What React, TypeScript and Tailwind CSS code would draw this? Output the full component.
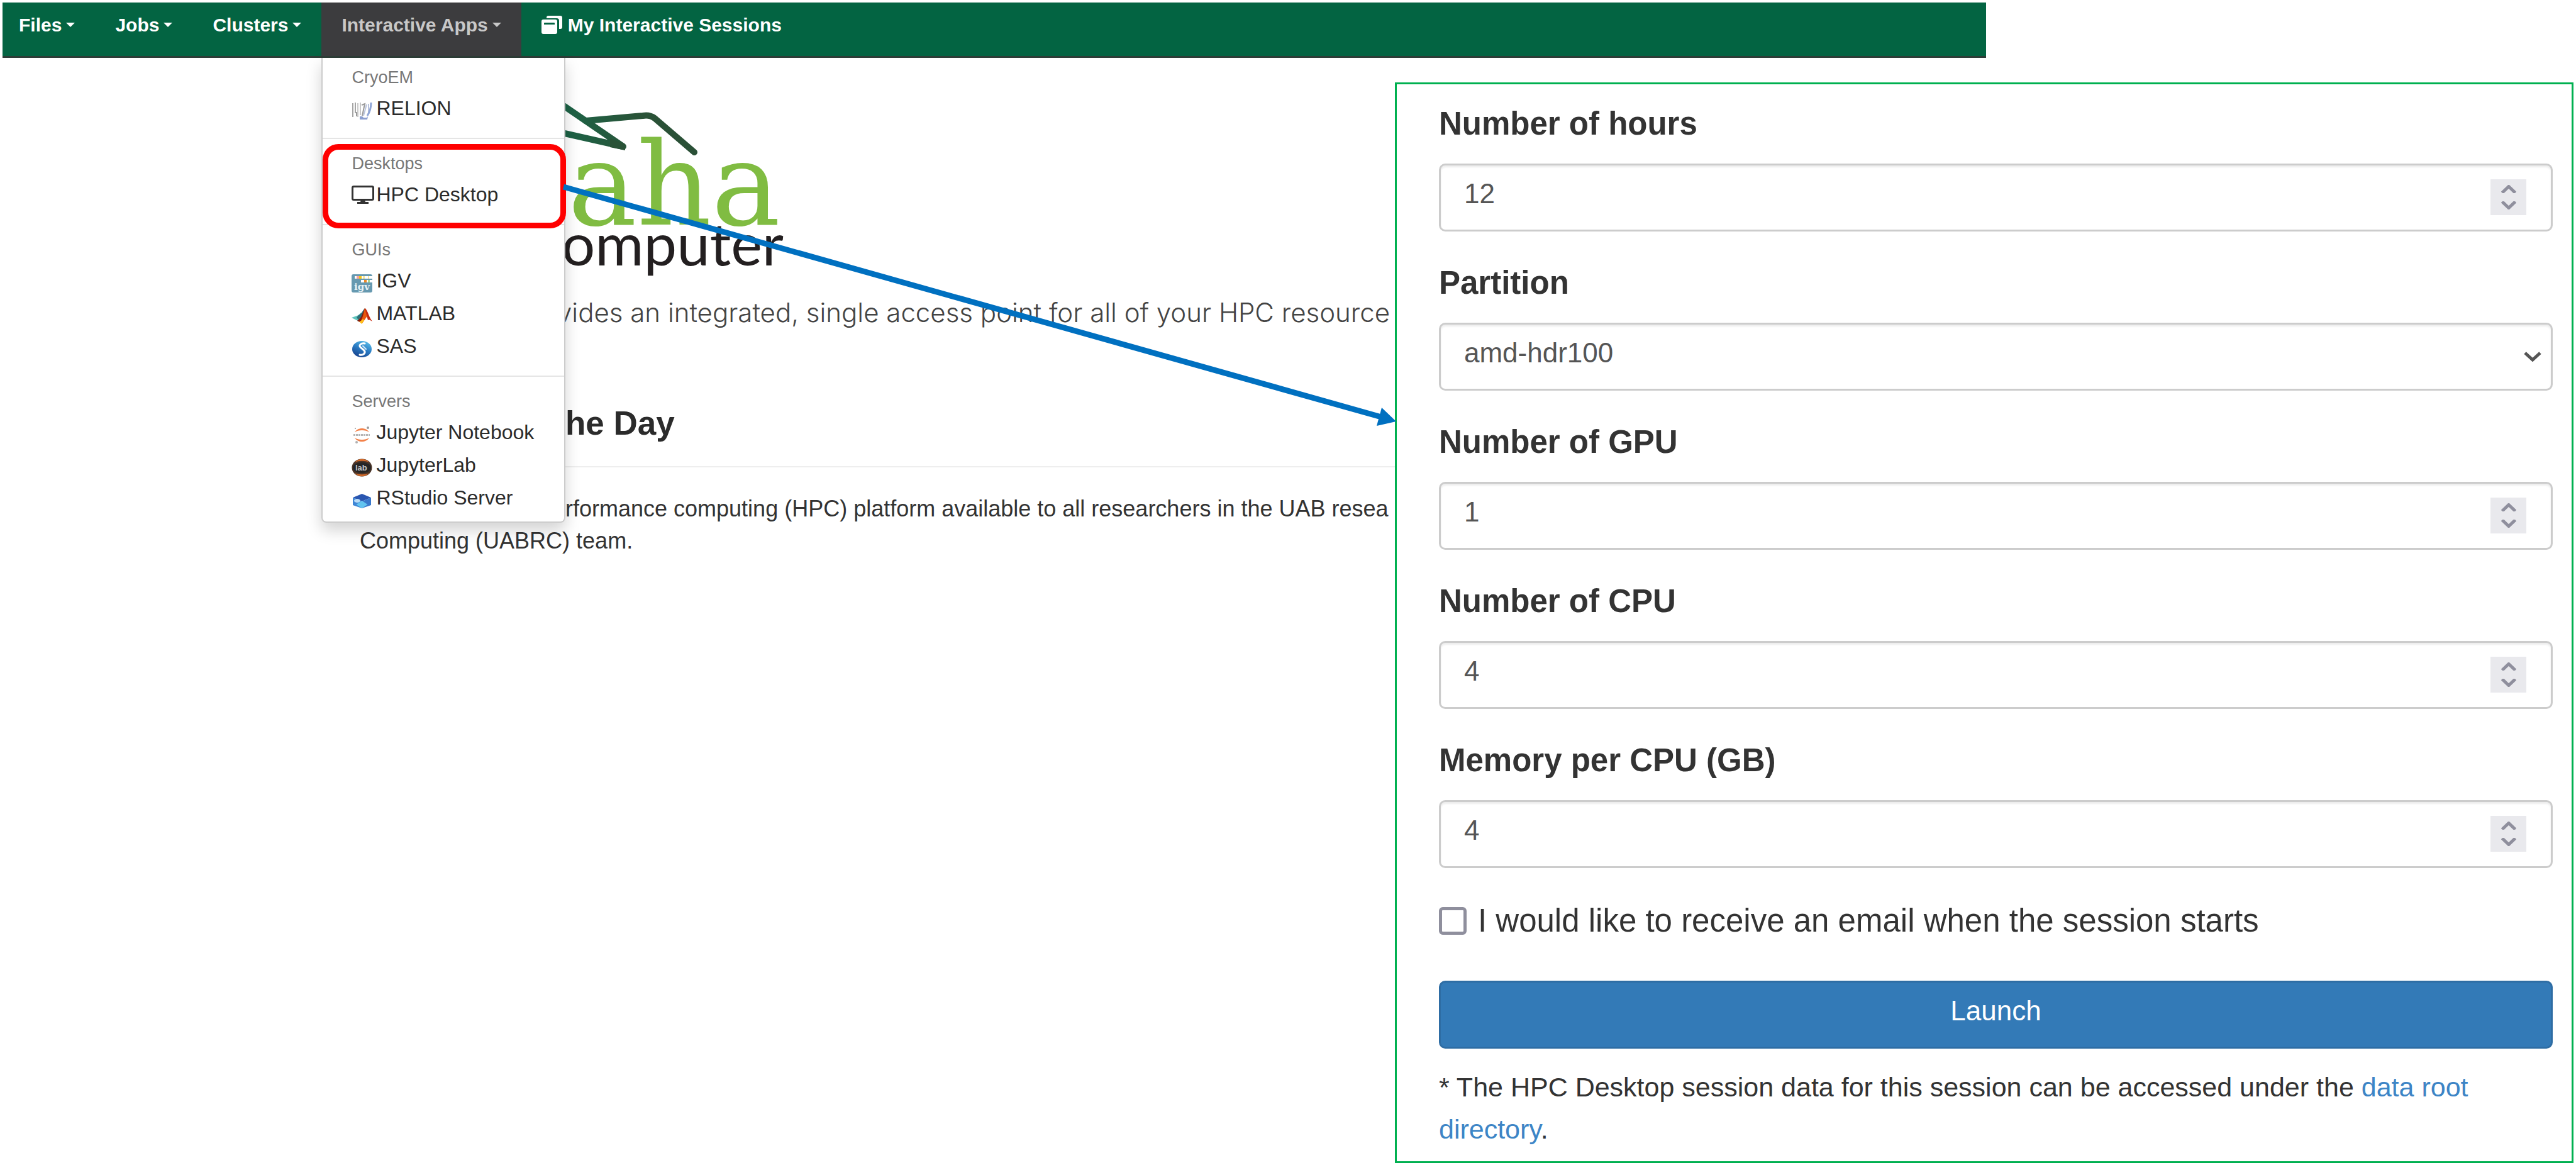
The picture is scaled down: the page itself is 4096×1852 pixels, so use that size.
import React from "react";

const SANS = "font-['Liberation_Sans',Arial,sans-serif]";

function Caret() {
  return (
    <svg className="h-[7px] w-[14px] fill-current" viewBox="0 0 14 7" aria-hidden="true">
      <path d="M0 0h14L7 7z" />
    </svg>
  );
}

function SessionsIcon() {
  return (
    <svg className="h-[29px] w-[33px]" viewBox="0 0 33 29" aria-hidden="true">
      <path fill="#fff" d="M11 0h19a3 3 0 0 1 3 3v15a3 3 0 0 1-3 3h-2V8a4 4 0 0 0-4-4H8V3a3 3 0 0 1 3-3z" />
      <path
        fill="#fff"
        fillRule="evenodd"
        d="M3 6h19a3 3 0 0 1 3 3v17a3 3 0 0 1-3 3H3a3 3 0 0 1-3-3V9a3 3 0 0 1 3-3zm2 5a1 1 0 0 0-1 1v2h17v-2a1 1 0 0 0-1-1z"
      />
    </svg>
  );
}

function RelionIcon() {
  return (
    <svg className="h-[29px] w-[33px]" viewBox="0 0 33 29" aria-hidden="true">
      <g fill="none" strokeWidth="2">
        <path stroke="#a5a5a5" d="M2 2v22M6 1v17" />
        <path stroke="#c9c9c9" d="M10 2v22M14 1v20" />
        <path stroke="#9a9a9a" d="M8 16v7M16 5l5-2-4 19" />
        <path stroke="#b9c3dc" d="M24 4l-5 18M27 3v14" />
        <path stroke="#8fa5d6" strokeWidth="3" d="M31 1c0 8-2 15-6 21" />
      </g>
      <path fill="#8c9fd0" d="M13 23h4l2 2h5l2-2-1 5H13z" />
    </svg>
  );
}

function DesktopIcon() {
  return (
    <svg className="h-[37px] w-[36px]" viewBox="0 0 36 37" aria-hidden="true">
      <rect x="1.500" y="1.500" width="33" height="21" rx="2" fill="none" stroke="#333" strokeWidth="3" />
      <path fill="#333" d="M15 23h6l1 3h5v3H9v-3h5z" />
    </svg>
  );
}

function IgvIcon() {
  return (
    <svg className="h-[29px] w-[33px]" viewBox="0 0 33 29" aria-hidden="true">
      <rect width="33" height="29" rx="3" fill="#6699b0" />
      <path fill="#fff" d="M5 3h28v4H5zM15 9h18v4H15z" />
      <path fill="#f4a3a0" d="M8 3h4v4H8z" />
      <path fill="#f5c518" d="M12 3h4v4h-4z" />
      <path fill="#f9e79f" d="M18 3h3v4h-3zM26 3h2v4h-2z" />
      <path fill="#f08a24" d="M20 9h4v4h-4z" />
      <path fill="#a9d18e" d="M26 9h3v4h-3z" />
      <text x="4" y="25" fontSize="15" fontWeight="700" fill="#e6f2f5" fontFamily="DejaVu Serif, serif">
        igv
      </text>
    </svg>
  );
}

function MatlabIcon() {
  return (
    <svg className="h-[29px] w-[33px]" viewBox="0 0 33 29" aria-hidden="true">
      <path fill="#5fc4bd" d="M0 17l11-4 4-4 3 2-8 11-4-2z" />
      <path fill="#2f6f78" d="M11 13c5-2 7-8 10-11l-4 13-6 5-3-3z" />
      <path fill="#8a1c0c" d="M21 2l-6 14-6 6 4 2 8-8z" />
      <path fill="#e8590c" d="M21 2c2 0 3 6 5 11l-9 13-4-2c5-5 6-14 8-22z" />
      <path fill="#ffc21a" d="M12 23c2 0 4-1 6-4l2 2-4 6z" />
      <path fill="#c62a10" d="M21 2c4 1 6 13 12 21-3-2-5-3-7-2z" />
    </svg>
  );
}

function SasIcon() {
  return (
    <svg className="h-[29px] w-[33px]" viewBox="0 0 33 29" aria-hidden="true">
      <defs>
        <linearGradient id="sas" x1="0.8" y1="0" x2="0.3" y2="1">
          <stop offset="0" stopColor="#5cc0ea" />
          <stop offset="0.5" stopColor="#2b7cc4" />
          <stop offset="1" stopColor="#16418c" />
        </linearGradient>
      </defs>
      <ellipse cx="16.500" cy="15" rx="15.500" ry="13" fill="url(#sas)" />
      <path
        fill="none"
        stroke="#fff"
        strokeWidth="3"
        strokeLinecap="round"
        d="M21 6c-6-1-10 3-7 6l6 5c3 4-1 8-7 7"
      />
      <path fill="none" stroke="#d7ecf8" strokeWidth="2" strokeLinecap="round" d="M18 10l5 5" />
    </svg>
  );
}

function JupyterIcon() {
  return (
    <svg className="h-[29px] w-[33px]" viewBox="0 0 33 29" aria-hidden="true">
      <path fill="#f3824a" d="M5 10c5-8 18-8 23 0-6-4-17-4-23 0zM5 19c5 8 18 8 23 0-6 4-17 4-23 0z" />
      <circle cx="26" cy="3" r="2" fill="#9a9a9a" />
      <circle cx="6" cy="4" r="1" fill="#9a9a9a" />
      <circle cx="8" cy="26" r="2" fill="#b0b0b0" />
      <path stroke="#b4b4b4" strokeWidth="3" strokeDasharray="3 1" d="M3 14.500h26" />
    </svg>
  );
}

function JupyterLabIcon() {
  return (
    <svg className="h-[29px] w-[33px]" viewBox="0 0 33 29" aria-hidden="true">
      <ellipse cx="16.500" cy="14.500" rx="16" ry="14" fill="#4a3428" />
      <path fill="#d0692a" d="M5 6c6-7 17-7 23 0-6-3-17-3-23 0zM5 23c6 7 17 7 23 0-6 3-17 3-23 0z" />
      <ellipse cx="16.500" cy="14.500" rx="14.500" ry="8.500" fill="#262626" />
      <text x="6" y="19" fontSize="13" fontWeight="700" fill="#c4c4c4" fontFamily="Liberation Sans, sans-serif">
        lab
      </text>
    </svg>
  );
}

function RStudioIcon() {
  return (
    <svg className="h-[29px] w-[33px]" viewBox="0 0 33 29" aria-hidden="true">
      <path fill="#2a56b0" d="M16.500 4L31 10 16.500 16 2 10z" />
      <path fill="#3f86d6" d="M2 10l14.500 6v11L2 22z" />
      <path fill="#3a78cc" d="M31 10l-14.500 6v11L31 22z" />
      <path fill="#62c4f0" d="M16.500 15l9 6-9 6-9-6z" />
      <ellipse cx="9" cy="15" rx="5" ry="3" fill="#b9dcf7" />
    </svg>
  );
}

function NavItem({ label }: { label: string }) {
  return (
    <a href="#" className="flex items-center gap-[7px] px-[32px] pb-[14px] text-white first:pl-[26px]">
      {label}
      <Caret />
    </a>
  );
}

function MenuHeader({ children }: { children: React.ReactNode }) {
  return <h6 className="text-[27px] leading-[46px] text-[#777]">{children}</h6>;
}

function MenuItem({ icon, children }: { icon: React.ReactNode; children: React.ReactNode }) {
  return (
    <a href="#" className="flex h-[52px] items-center text-[32px] leading-[52px] text-[#2b2b2b]">
      <span className="w-[39px] shrink-0 pt-[8px]">{icon}</span>
      {children}
    </a>
  );
}

function MenuDivider() {
  return <hr className="mt-[21px] mb-[16px] border-t-2 border-[#e5e5e5]" />;
}

function AppsMenu() {
  return (
    <div className="absolute top-[88px] left-0 z-20 w-[388px] rounded-b-[8px] border-2 border-t-0 border-[#ccc] bg-white pt-[8px] pb-[12px] font-normal shadow-[0_12px_24px_rgba(0,0,0,0.175)]">
      <section className="pl-[46px]">
        <MenuHeader>CryoEM</MenuHeader>
        <MenuItem icon={<RelionIcon />}>RELION</MenuItem>
      </section>
      <MenuDivider />
      <section className="relative pl-[46px]">
        <MenuHeader>Desktops</MenuHeader>
        <MenuItem icon={<DesktopIcon />}>HPC Desktop</MenuItem>
        <div className="pointer-events-none absolute -top-[8px] -right-[3px] -bottom-[28px] left-0 rounded-[25px] border-[9px] border-[#ff0000]" />
      </section>
      <MenuDivider />
      <section className="pl-[46px]">
        <MenuHeader>GUIs</MenuHeader>
        <MenuItem icon={<IgvIcon />}>IGV</MenuItem>
        <MenuItem icon={<MatlabIcon />}>MATLAB</MenuItem>
        <MenuItem icon={<SasIcon />}>SAS</MenuItem>
      </section>
      <MenuDivider />
      <section className="pl-[46px]">
        <MenuHeader>Servers</MenuHeader>
        <MenuItem icon={<JupyterIcon />}>Jupyter Notebook</MenuItem>
        <MenuItem icon={<JupyterLabIcon />}>JupyterLab</MenuItem>
        <MenuItem icon={<RStudioIcon />}>RStudio Server</MenuItem>
      </section>
    </div>
  );
}

function NavBar() {
  return (
    <nav className="mt-[4px] ml-[4px] flex h-[88px] w-[77%] border-b-[3px] border-[#2d3d37] bg-[#036442] text-[30px] font-bold">
      <NavItem label="Files" />
      <NavItem label="Jobs" />
      <NavItem label="Clusters" />
      <div className="relative flex">
        <button
          type="button"
          aria-expanded="true"
          className="flex items-center gap-[7px] bg-[#3c3c3e] px-[32px] pb-[14px] text-[#c8c8c8]"
        >
          Interactive Apps
          <Caret />
        </button>
        <AppsMenu />
      </div>
      <a href="#" className="flex items-center gap-[9px] px-[32px] pb-[14px] text-white">
        <SessionsIcon />
        My Interactive Sessions
      </a>
    </nav>
  );
}

function MountainLogo() {
  return (
    <svg className="ml-[308px] block h-[154px] w-[240px] overflow-visible" viewBox="0 0 240 154" aria-hidden="true">
      <defs>
        <linearGradient id="ridge" x1="0" y1="0" x2="240" y2="0" gradientUnits="userSpaceOnUse">
          <stop offset="0" stopColor="#1b6649" />
          <stop offset="0.6" stopColor="#2a5237" />
          <stop offset="1" stopColor="#2a4f36" />
        </linearGradient>
      </defs>
      <g fill="none" stroke="url(#ridge)" strokeWidth="10" strokeLinejoin="round">
        <path d="M0 65L111 141L0 116" />
        <path d="M51 100L142 92Q153 90 161 96L224 150" strokeLinecap="round" />
      </g>
      <path fill="#2a5237" d="M90 128L114 137V147L90 142z" />
    </svg>
  );
}

function Welcome() {
  return (
    <main className="w-[54.15%] shrink-0 overflow-hidden pl-[572px] whitespace-nowrap">
      <MountainLogo />
      <p className="pl-[331px] font-['DejaVu_Serif',serif] text-[184px] leading-[94px] text-[#80bc42]">aha</p>
      <p className="pl-[321px] font-['Lato',sans-serif] text-[94px] leading-[92px] text-[#231f20]">omputer</p>
      <p className="mt-[35px] pl-[314px] font-['Inter',sans-serif] text-[42px] leading-[60px] font-light text-[#444]">
        vides an integrated, single access point for all of your HPC resource
      </p>
      <h2 className="mt-[116px] pl-[327px] text-[53px] leading-[60px] font-bold text-[#2b2b2b]">he Day</h2>
      <hr className="mt-[38px] border-t-2 border-[#eee]" />
      <p className="mt-[40px] text-[36px] leading-[51px] text-[#333]">
        <span className="block pl-[327px]">
          rformance computing (HPC) platform available to all researchers in the UAB resea
        </span>
        Computing (UABRC) team.
      </p>
    </main>
  );
}

const controlClass =
  "h-[108px] w-full appearance-none rounded-[10px] border-[3px] border-[#ccc] bg-white px-[37px] pb-[12px] text-[44px] text-[#555] shadow-[inset_0_3px_3px_rgba(0,0,0,0.075)]";

function StepButton({ label, path }: { label: string; path: string }) {
  return (
    <button type="button" aria-label={label} className="flex justify-center">
      <svg className="h-[13px] w-[24px]" viewBox="0 0 24 13" aria-hidden="true">
        <path d={path} fill="none" stroke="#8f8f9d" strokeWidth="5" />
      </svg>
    </button>
  );
}

function NumberField({ id, label, value }: { id: string; label: string; value: string }) {
  return (
    <div>
      <label htmlFor={id} className="mb-[33px] block text-[51px] leading-[60px] font-bold text-[#333]">
        {label}
      </label>
      <div className="relative">
        <input
          id={id}
          type="number"
          defaultValue={value}
          className={controlClass + " block [appearance:textfield] [&::-webkit-inner-spin-button]:appearance-none"}
        />
        <div className="absolute top-[25px] right-[42px] flex h-[57px] w-[57px] flex-col justify-between bg-[#e9e9ed] py-[9px]">
          <StepButton label={"Increase " + label} path="M1.500 12.500L12 2.500L22.500 12.500" />
          <StepButton label={"Decrease " + label} path="M1.500 0.500L12 10.500L22.500 0.500" />
        </div>
      </div>
    </div>
  );
}

function SessionForm() {
  return (
    <form className="relative z-10 mt-[39px] mr-[4px] flex-1 border-[3px] border-[#00b050] bg-white pt-[33px] pr-[30px] pb-[17px] pl-[67px] text-[#333]">
      <div className="flex flex-col gap-[52px]">
        <NumberField id="hours" label="Number of hours" value="12" />
        <div>
          <label htmlFor="partition" className="mb-[33px] block text-[51px] leading-[60px] font-bold">
            Partition
          </label>
          <div className="relative">
            <select id="partition" className={controlClass + " block"}>
              <option>amd-hdr100</option>
            </select>
            <svg
              className="pointer-events-none absolute top-[46px] right-[18px] h-[16px] w-[28px]"
              viewBox="0 0 28 16"
              aria-hidden="true"
            >
              <path d="M2 2L14 13L26 2" fill="none" stroke="#555" strokeWidth="5" />
            </svg>
          </div>
        </div>
        <NumberField id="gpu" label="Number of GPU" value="1" />
        <NumberField id="cpu" label="Number of CPU" value="4" />
        <NumberField id="memory" label="Memory per CPU (GB)" value="4" />
      </div>
      <label className="mt-[54px] flex items-center gap-[18px] text-[51px] leading-[60px]">
        <input
          type="checkbox"
          className="h-[44px] w-[44px] shrink-0 appearance-none rounded-[6px] border-[5px] border-[#8f8f9d] bg-white"
        />
        I would like to receive an email when the session starts
      </label>
      <button
        type="submit"
        className="mt-[65px] block h-[108px] w-full rounded-[10px] border-[3px] border-[#2e6da4] bg-[#337ab7] pb-[12px] text-[44px] text-white"
      >
        Launch
      </button>
      <p className="mt-[28px] text-[43px] leading-[67px]">
        * The HPC Desktop session data for this session can be accessed under the{" "}
        <a href="#" className="text-[#3d85c6]">
          data root
          <br />
          directory
        </a>
        .
      </p>
    </form>
  );
}

function PointerArrow() {
  return (
    <svg
      className="pointer-events-none absolute top-[280px] left-[880px] z-30 h-[400px] w-[1340px]"
      viewBox="880 280 1340 400"
      aria-hidden="true"
    >
      <path d="M896 297L2200 664" stroke="#0070c0" strokeWidth="9" fill="none" />
      <path d="M2220 670L2197 648L2189 677z" fill="#0070c0" />
    </svg>
  );
}

export default function App() {
  return (
    <div className={"relative flow-root min-h-screen overflow-hidden bg-white " + SANS}>
      <NavBar />
      <div className="flex items-start">
        <Welcome />
        <SessionForm />
      </div>
      <PointerArrow />
    </div>
  );
}
